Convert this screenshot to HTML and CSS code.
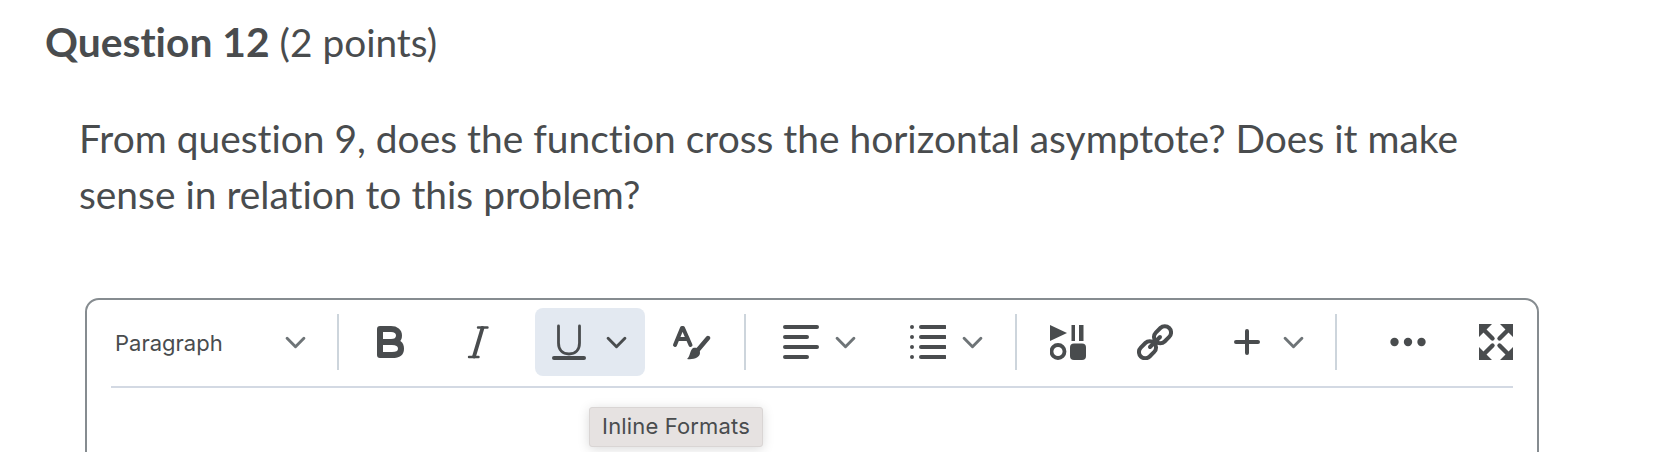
FILE: index.html
```html
<!DOCTYPE html>
<html lang="en">
<head>
<meta charset="utf-8">
<title>Question 12</title>
<link rel="stylesheet" href="styles.css">
</head>
<body>
<main class="page">
  <h2 class="q-title"><strong>Question 12</strong> <span class="q-points">(2 points)</span></h2>
  <p class="q-text">From question 9, does the function cross the horizontal asymptote? Does it make sense in relation to this problem?</p>
  <section class="editor">
    <div class="toolbar">
      <div class="format-select">
        <span>Paragraph</span>
        <svg class="chev" viewBox="0 0 20 12"><path d="M2 2l8 8 8-8"/></svg>
      </div>
      <i class="sep"></i>
      <svg class="icon ic-b" viewBox="0 0 36 36"><path class="s" style="stroke-width:6" d="M8 5h11c5 0 8 2.500 8 6.500S24 18 19 18H8h12c6 0 9 2.500 9 6.700S26 31 20 31H8z"/></svg>
      <svg class="icon ic-i" viewBox="0 0 36 36"><path class="s" style="stroke-width:2.400" d="M18 3.500h9.500M9 33h9.500"/><path class="s" style="stroke-width:3.800" d="M22.500 4L14 32.500"/></svg>
      <div class="split active">
        <svg class="icon" viewBox="0 0 36 36"><path class="s" style="stroke-width:2.800" d="M7.500 2v17c0 7 4 11 10.500 11s10.500-4 10.500-11V2"/><path class="s" style="stroke-width:4" d="M3 34h30"/></svg>
        <svg class="chev dark" viewBox="0 0 20 12"><path d="M2 2l8 8 8-8"/></svg>
      </div>
      <svg class="icon wide ic-paint" viewBox="0 0 40 36"><path class="s" style="stroke-width:4" d="M4 21L11 4h1l7.500 17M7 15h10"/><path class="s" style="stroke-width:4.400" d="M37 14L26 27"/><path class="f" d="M22 24c4-1 7 1 7 5 0 4-6 7-13 6 3-2 3-9 6-11z"/></svg>
      <i class="sep ic-sep1"></i>
      <svg class="icon ic-align" viewBox="0 0 36 36"><path class="s" style="stroke-width:4" d="M2 3h32M2 13h22M2 23h32M2 33h22"/></svg>
      <svg class="chev ic-chev" viewBox="0 0 20 12"><path d="M2 2l8 8 8-8"/></svg>
      <svg class="icon ic-list" viewBox="0 0 36 36"><path class="s" style="stroke-width:4" d="M11 3h24M11 13h24M11 23h24M11 33h24"/><path class="f" d="M2 1a2 2 0 1 0 0 4 2 2 0 1 0 0-4zM2 11a2 2 0 1 0 0 4 2 2 0 1 0 0-4zM2 21a2 2 0 1 0 0 4 2 2 0 1 0 0-4zM2 31a2 2 0 1 0 0 4 2 2 0 1 0 0-4z"/></svg>
      <svg class="chev ic-chev" viewBox="0 0 20 12"><path d="M2 2l8 8 8-8"/></svg>
      <i class="sep ic-sep2"></i>
      <svg class="icon ic-media" viewBox="0 0 36 36"><path class="f" d="M0 1L17 9 0 17z"/><path class="f" d="M21.500 1h3.500v16h-3.500zM29 1h4.500v16H29z"/><circle class="s" style="stroke-width:3.800" cx="8" cy="27.500" r="6.500"/><rect class="f" x="20" y="19.500" width="16" height="16.500" rx="4"/></svg>
      <svg class="icon ic-link" viewBox="0 0 36 36"><g class="s" style="stroke-width:4"><rect x="16" y="4.500" width="19" height="12.500" rx="6.250" transform="rotate(-45 25.500 10.750)"/><rect x="1" y="19.500" width="19" height="12.500" rx="6.250" transform="rotate(-45 10.500 25.750)"/><path d="M13 23l10-10"/></g></svg>
      <svg class="icon ic-plus" viewBox="0 0 36 36"><path class="s" style="stroke-width:4" d="M7 18h22M18 7v22"/></svg>
      <svg class="chev ic-chev3" viewBox="0 0 20 12"><path d="M2 2l8 8 8-8"/></svg>
      <i class="sep ic-sep3"></i>
      <svg class="icon ic-dots" viewBox="0 0 36 36"><circle class="f" cx="4.500" cy="18" r="4.200"/><circle class="f" cx="18" cy="18" r="4.200"/><circle class="f" cx="31.500" cy="18" r="4.200"/></svg>
      <svg class="icon ic-full" viewBox="0 0 36 36"><path class="f" d="M1 0h13L1 13zM35 0H22l13 13zM1 36h13L1 23zM35 36H22l13-13z"/><path class="s" style="stroke-width:4.400" d="M5 5l9.500 9.500M31 5l-9.500 9.500M5 31l9.500-9.500M31 31l-9.500-9.500"/></svg>
    </div>
    <div class="tooltip">Inline Formats</div>
  </section>
</main>
</body>
</html>
```
FILE: styles.css
```css
html, body {
  margin: 0;
  padding: 0;
  background: #fff;
}
body {
  height: 452px;
  overflow: hidden;
  font-family: Lato, sans-serif;
  font-variant-ligatures: none;
  color: #494c4e;
}
.page {
  padding: 0 131px 0 45px;
}
.q-title {
  margin: 0;
  padding-top: 18px;
  font-size: 38.800px;
  line-height: 47px;
  font-weight: 400;
}
.q-title strong {
  font-size: 40.800px;
  font-weight: 700;
}
.q-text {
  margin: 45px 60px 0 34px;
  font-size: 38.900px;
  line-height: 55.500px;
}
.editor {
  position: relative;
  margin: 76px 0 0 40px;
  width: 1454px;
  height: 300px;
  border: 2px solid #868c90;
  border-radius: 14px;
  padding: 0 24px;
  box-sizing: border-box;
}
.toolbar {
  display: flex;
  align-items: center;
  height: 68px;
  padding: 8px 0 10px;
  border-bottom: 2px solid #d3d9e3;
  width: 1402px;
}
.format-select {
  display: flex;
  flex: none;
  align-items: center;
  width: 226px;
  box-sizing: border-box;
  padding: 0 31px 0 4px;
  font-family: Inter, sans-serif;
  font-size: 22px;
  color: #494c4e;
}
.format-select span {
  padding-top: 2px;
}
.format-select .chev {
  margin-left: auto;
}
.sep {
  display: block;
  flex: none;
  width: 2px;
  height: 56px;
  background: #cdd5dc;
}
.icon {
  display: block;
  flex: none;
  width: 36px;
  height: 36px;
}
.icon.wide {
  width: 40px;
}
.s {
  fill: none;
  stroke: #494c4e;
  stroke-linecap: round;
  stroke-linejoin: round;
}
.f {
  fill: #494c4e;
}
.chev {
  display: block;
  flex: none;
  width: 21px;
  height: 13px;
  fill: none;
  stroke: #6e7477;
  stroke-width: 2.800;
  stroke-linecap: round;
  stroke-linejoin: round;
}
.chev.dark {
  stroke: #494c4e;
}
.split {
  display: flex;
  align-items: center;
  flex: none;
}
.active {
  margin-left: 39px;
  width: 110px;
  height: 68px;
  padding-left: 16px;
  box-sizing: border-box;
  background: #e3e9f1;
  border-radius: 8px;
}
.active .chev {
  margin-left: 19px;
}
.ic-b { margin-left: 33px; }
.ic-i { margin-left: 52px; }
.ic-paint { margin-left: 26px; }
.ic-sep1 { margin-left: 33px; }
.ic-align { margin-left: 37px; }
.ic-chev { margin-left: 16px; }
.ic-chev3 { margin-left: 18px; }
.ic-list { margin-left: 54px; }
.ic-sep2 { margin-left: 32px; }
.ic-sep3 { margin-left: 31px; }
.ic-media { margin-left: 33px; }
.ic-link { margin-left: 51px; }
.ic-plus { margin-left: 56px; }
.ic-dots { margin-left: 53px; }
.ic-full { margin-left: 52px; }
.tooltip {
  position: absolute;
  left: 502px;
  top: 107px;
  box-sizing: border-box;
  width: 174px;
  height: 40px;
  line-height: 37px;
  text-align: center;
  font-family: Inter, sans-serif;
  font-size: 22px;
  letter-spacing: 0.150px;
  color: #494c4e;
  background: #e6e2e1;
  border: 1px solid #d9d5d4;
  border-radius: 3px;
  box-shadow: 0 2px 12px rgba(0, 0, 0, 0.15);
}
```
